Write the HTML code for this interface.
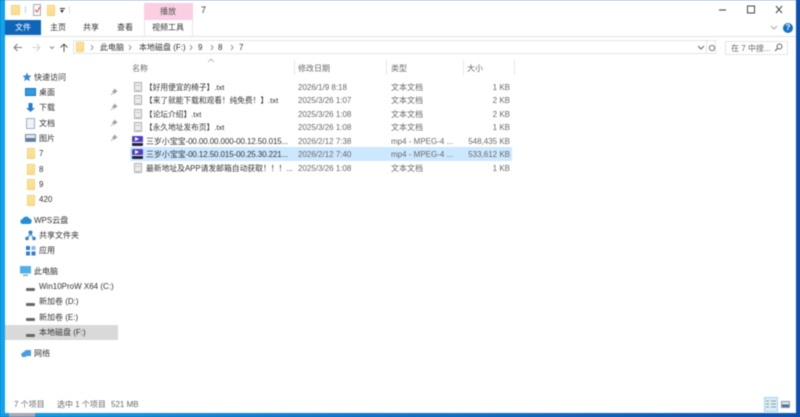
<!DOCTYPE html>
<html><head><meta charset="utf-8"><style>
html,body{margin:0;padding:0;width:800px;height:417px;overflow:hidden;background:#1058b8}
#a{position:absolute;left:0;top:0;width:800px;height:417px;overflow:hidden;filter:blur(.4px);font-family:"Liberation Sans","Noto Sans CJK SC",sans-serif;font-size:8px;color:#333}
#a div,#a svg{position:absolute}
.t{white-space:nowrap;line-height:12px;height:12px;margin-top:1px}
.g{color:#686868}
.n{font-size:7.7px}
.s{width:1px;background:#e5e5e5}
.f{background:linear-gradient(#fbe39a,#f9dd87);border-radius:1px;box-shadow:inset 0 0 0 .5px #e8c66a}
.d{width:8px;height:10px;background:#ececec;border:1px solid #b0b0b0;box-sizing:border-box}
.d:after{content:"";position:absolute;left:1px;right:1px;top:2px;height:4px;border-top:1px solid #c4c4c4;border-bottom:1px solid #c4c4c4}
.v{width:11px;height:10px;background:linear-gradient(#5140c4 0 60%,#e8e8f0 60% 70%,#23233f 70%);border-radius:1px}
.v:after{content:"";position:absolute;left:3px;top:1px;border-left:4px solid #fff;border-top:2px solid transparent;border-bottom:2px solid transparent}
.h{width:9px;height:3px;background:#666;border-radius:1px}
</style></head><body><div id="a">
<div style="left:0;top:0;width:5px;height:417px;background:#12a3ea"></div>
<div style="left:0;top:413px;width:800px;height:4px;background:linear-gradient(90deg,#129fe6,#0f78d0 45%,#0d52b0)"></div>
<div style="left:9px;top:413px;width:26px;height:4px;background:#a8a8b0"></div>
<div style="left:796px;top:0;width:4px;height:417px;background:#0e4fae"></div>
<div style="left:5px;top:0;width:791px;height:413px;background:#fff"></div>

<div class="f" style="left:11px;top:5px;width:9px;height:10px"></div>
<div style="left:25px;top:6px;width:1px;height:7px;background:#ccc"></div>
<div style="left:33px;top:4px;width:6px;height:10px;background:#fafafa;border:1px solid #aaa"></div>
<svg style="left:34px;top:6px" width="7" height="7"><path d="M1 4l2 2 3-5" fill="none" stroke="#d9484a" stroke-width="1"/></svg>
<div class="f" style="left:47px;top:5px;width:8px;height:11px"></div>
<div style="left:60px;top:8px;width:5px;height:1px;background:#333"></div>
<div style="left:60px;top:10px;width:0;height:0;border:2.5px solid transparent;border-top:3px solid #333"></div>
<div style="left:69px;top:6px;width:1px;height:7px;background:#ddd"></div>

<div style="left:144px;top:3px;width:49px;height:17px;background:#f9cfe1"></div>
<div class="t" style="left:160px;top:5px;color:#555">播放</div>
<div class="t" style="left:201px;top:3px;font-size:9px;color:#333">7</div>

<svg style="left:716px;top:4px" width="72" height="12"><path d="M3 6h7" stroke="#555" stroke-width="1.2"/><rect x="31.5" y="2" width="7" height="7" fill="none" stroke="#444" stroke-width="1"/><path d="M60 2l6 7M66 2l-6 7" stroke="#444" stroke-width="1"/></svg>

<div style="left:5px;top:20px;width:36px;height:15px;background:#0f66b8"></div>
<div class="t" style="left:15px;top:21px;color:#fff">文件</div>
<div class="t" style="left:50px;top:21px">主页</div>
<div class="t" style="left:83px;top:21px">共享</div>
<div class="t" style="left:117px;top:21px">查看</div>
<div style="left:144px;top:20px;width:1px;height:16px;background:#e6e6e6"></div>
<div style="left:192px;top:20px;width:1px;height:16px;background:#e6e6e6"></div>
<div class="t" style="left:152px;top:21px">视频工具</div>
<svg style="left:770px;top:25px" width="8" height="6"><path d="M1 1l3 3 3-3" fill="none" stroke="#aaa" stroke-width="1"/></svg>
<div style="left:783px;top:23px;width:10px;height:10px;border-radius:50%;background:#1370c4;color:#fff;font-size:8px;font-weight:bold;line-height:10px;text-align:center">?</div>
<div style="left:5px;top:36px;width:791px;height:1px;background:#e2e2e2"></div>

<svg style="left:12px;top:42px" width="60" height="11"><path d="M2 5.5h8M2 5.5l3.5-3.5M2 5.5l3.5 3.5" fill="none" stroke="#777" stroke-width="1"/><path d="M20 5.5h8M28 5.5l-3.5-3.5M28 5.5l-3.5 3.5" fill="none" stroke="#d2d2d2" stroke-width="1"/><path d="M38 4.5l2 2 2-2" fill="none" stroke="#888" stroke-width="1"/><path d="M52 10V2M52 2l-3.5 3.5M52 2l3.5 3.5" fill="none" stroke="#555" stroke-width="1"/></svg>
<div style="left:73px;top:40px;width:643px;height:14px;border:1px solid #e3e3e3;box-sizing:border-box"></div>
<div class="f" style="left:76px;top:42px;width:8px;height:10px"></div>
<svg style="left:90px;top:44px" width="160" height="7"><path d="M1 1l2 2.5-2 2.5M39 1l2 2.5-2 2.5M100 1l2 2.5-2 2.5M121 1l2 2.5-2 2.5M141 1l2 2.5-2 2.5" fill="none" stroke="#888" stroke-width=".9"/></svg>
<div class="t" style="left:100px;top:41px">此电脑</div>
<div class="t" style="left:139px;top:41px">本地磁盘 (F:)</div>
<div class="t" style="left:198px;top:41px">9</div>
<div class="t" style="left:218px;top:41px">8</div>
<div class="t" style="left:239px;top:41px">7</div>
<svg style="left:698px;top:44px" width="20" height="8"><path d="M0 2l3 3 3-3" fill="none" stroke="#666" stroke-width="1"/><circle cx="14" cy="4" r="2.6" fill="none" stroke="#777" stroke-width="1"/></svg>
<div style="left:706px;top:40px;width:1px;height:14px;background:#e3e3e3"></div>
<div style="left:725px;top:41px;width:63px;height:14px;border:1px solid #e6e6e6;box-sizing:border-box"></div>
<div class="t g" style="left:731px;top:42px">在 7 中搜...</div>
<svg style="left:774px;top:43px" width="9" height="9"><circle cx="5.5" cy="3.5" r="2.5" fill="none" stroke="#666"/><path d="M3.5 5.5L1 8" stroke="#666" stroke-width="1.2"/></svg>

<svg style="left:207px;top:58px" width="8" height="5"><path d="M1 4l3-3 3 3" fill="none" stroke="#aaa" stroke-width=".8"/></svg>
<div class="s" style="left:294px;top:60px;height:15px"></div>
<div class="s" style="left:386px;top:60px;height:15px"></div>
<div class="s" style="left:463px;top:60px;height:15px"></div>
<div class="s" style="left:514px;top:60px;height:15px"></div>
<div class="t g" style="left:132px;top:62px">名称</div>
<div class="t g" style="left:298px;top:62px">修改日期</div>
<div class="t g" style="left:391px;top:62px">类型</div>
<div class="t g" style="left:467px;top:62px">大小</div>

<div style="left:130px;top:147px;width:382px;height:14px;background:#cce8ff"></div>

<div class="d" style="left:134px;top:82px"></div>
<div class="d" style="left:134px;top:95px"></div>
<div class="d" style="left:134px;top:109px"></div>
<div class="d" style="left:134px;top:122px"></div>
<div class="v" style="left:132px;top:136px"></div>
<div class="v" style="left:132px;top:149px"></div>
<div class="d" style="left:134px;top:163px"></div>

<div class="t n" style="left:145px;top:81px">【好用便宜的椅子】.txt</div>
<div class="t n" style="left:145px;top:94px">【来了就能下载和观看！纯免费！】.txt</div>
<div class="t n" style="left:145px;top:108px">【论坛介绍】.txt</div>
<div class="t n" style="left:145px;top:121px">【永久地址发布页】.txt</div>
<div class="t" style="left:146px;top:135px;letter-spacing:-.1px">三岁小宝宝-00.00.00.000-00.12.50.015...</div>
<div class="t" style="left:146px;top:148px;letter-spacing:-.1px">三岁小宝宝-00.12.50.015-00.25.30.221...</div>
<div class="t" style="left:146px;top:162px;font-size:7.8px">最新地址及APP请发邮箱自动获取！！！...</div>

<div class="t g" style="left:298px;top:81px">2026/1/9 8:18</div>
<div class="t g" style="left:298px;top:94px">2025/3/26 1:07</div>
<div class="t g" style="left:298px;top:108px">2025/3/26 1:08</div>
<div class="t g" style="left:298px;top:121px">2025/3/26 1:08</div>
<div class="t g" style="left:298px;top:135px">2026/2/12 7:38</div>
<div class="t g" style="left:298px;top:148px">2026/2/12 7:40</div>
<div class="t g" style="left:298px;top:162px">2025/3/26 1:08</div>

<div class="t g" style="left:391px;top:81px">文本文档</div>
<div class="t g" style="left:391px;top:94px">文本文档</div>
<div class="t g" style="left:391px;top:108px">文本文档</div>
<div class="t g" style="left:391px;top:121px">文本文档</div>
<div class="t g" style="left:391px;top:135px">mp4 - MPEG-4 ...</div>
<div class="t g" style="left:391px;top:148px">mp4 - MPEG-4 ...</div>
<div class="t g" style="left:391px;top:162px">文本文档</div>

<div class="t g" style="right:290px;top:81px">1 KB</div>
<div class="t g" style="right:290px;top:94px">2 KB</div>
<div class="t g" style="right:290px;top:108px">2 KB</div>
<div class="t g" style="right:290px;top:121px">1 KB</div>
<div class="t g" style="right:290px;top:135px">548,435 KB</div>
<div class="t g" style="right:290px;top:148px">533,612 KB</div>
<div class="t g" style="right:290px;top:162px">1 KB</div>

<div style="left:5px;top:325px;width:113px;height:15px;background:#d9d9d9"></div>

<svg style="left:22px;top:72px" width="10" height="10"><path d="M5 .5l1.4 3 3.1.3-2.4 2.1.8 3.3L5 7.5 2.1 9.2l.8-3.3L.5 3.8l3.1-.3z" fill="#3d87d6"/></svg>
<div class="t" style="left:34px;top:71px">快速访问</div>
<div style="left:25px;top:88px;width:11px;height:8px;background:#2f9be6;border:1px solid #1d6fb8;box-sizing:border-box"></div>
<div class="t" style="left:39px;top:86px">桌面</div>
<svg style="left:25px;top:102px" width="11" height="11"><path d="M3.5 1h4v5H10L5.5 10 1 6h2.5z" fill="#2a7cd3"/></svg>
<div class="t" style="left:39px;top:101px">下载</div>
<div style="left:26px;top:118px;width:9px;height:11px;background:#eef3f8;border:1px solid #9fb0c0;box-sizing:border-box"></div>
<div class="t" style="left:39px;top:117px">文档</div>
<div style="left:25px;top:134px;width:11px;height:8px;background:linear-gradient(#dfe8f2 50%,#5b7da3 50%);border:1px solid #7a8ea5;box-sizing:border-box"></div>
<div class="t" style="left:39px;top:132px">图片</div>
<svg style="left:110px;top:88px" width="8" height="8"><path d="M4.5 1l2.5 2.5-1.5.5-1 1.5-2-2 1.5-1zM3 5L1 7" fill="#a0a0a0" stroke="#a0a0a0" stroke-width=".7"/></svg>
<svg style="left:110px;top:103px" width="8" height="8"><path d="M4.5 1l2.5 2.5-1.5.5-1 1.5-2-2 1.5-1zM3 5L1 7" fill="#a0a0a0" stroke="#a0a0a0" stroke-width=".7"/></svg>
<svg style="left:110px;top:119px" width="8" height="8"><path d="M4.5 1l2.5 2.5-1.5.5-1 1.5-2-2 1.5-1zM3 5L1 7" fill="#a0a0a0" stroke="#a0a0a0" stroke-width=".7"/></svg>
<svg style="left:110px;top:134px" width="8" height="8"><path d="M4.5 1l2.5 2.5-1.5.5-1 1.5-2-2 1.5-1zM3 5L1 7" fill="#a0a0a0" stroke="#a0a0a0" stroke-width=".7"/></svg>

<div class="f" style="left:27px;top:148px;width:8px;height:11px"></div><div class="t" style="left:39px;top:147px">7</div>
<div class="f" style="left:27px;top:164px;width:8px;height:11px"></div><div class="t" style="left:39px;top:163px">8</div>
<div class="f" style="left:27px;top:179px;width:8px;height:11px"></div><div class="t" style="left:39px;top:178px">9</div>
<div class="f" style="left:27px;top:195px;width:8px;height:11px"></div><div class="t" style="left:39px;top:193px">420</div>

<svg style="left:20px;top:215px" width="12" height="10"><path d="M3 9a2.5 2.5 0 0 1-.3-5A3.6 3.6 0 0 1 9.3 3.5 2.8 2.8 0 0 1 9.5 9z" fill="#1f8fd8"/></svg>
<div class="t" style="left:34px;top:214px">WPS云盘</div>
<svg style="left:25px;top:230px" width="11" height="11"><circle cx="5.5" cy="2.5" r="2" fill="#2f7fd0"/><circle cx="2" cy="8.5" r="1.8" fill="#2f7fd0"/><circle cx="9" cy="8.5" r="1.8" fill="#2f7fd0"/><path d="M5.5 4L2 8.5M5.5 4L9 8.5" stroke="#2f7fd0"/></svg>
<div class="t" style="left:39px;top:229px">共享文件夹</div>
<svg style="left:26px;top:246px" width="10" height="10"><rect width="4" height="4" fill="#2f7fd0"/><rect x="5.5" width="4" height="4" fill="#8fb8e4"/><rect y="5.5" width="4" height="4" fill="#2f7fd0"/><rect x="5.5" y="5.5" width="4" height="4" fill="#2f7fd0"/></svg>
<div class="t" style="left:39px;top:244px">应用</div>

<svg style="left:20px;top:266px" width="12" height="11"><rect y="0" width="11" height="7.5" fill="#4fb0e8"/><rect x="3" y="8.5" width="5" height="1.5" fill="#8fa8bd"/></svg>
<div class="t" style="left:34px;top:265px">此电脑</div>
<div class="h" style="left:26px;top:288px"></div><div class="t" style="left:39px;top:280px">Win10ProW X64 (C:)</div>
<div class="h" style="left:26px;top:303px"></div><div class="t" style="left:39px;top:295px">新加卷 (D:)</div>
<div class="h" style="left:26px;top:318px"></div><div class="t" style="left:39px;top:311px">新加卷 (E:)</div>
<div class="h" style="left:26px;top:334px"></div><div class="t" style="left:39px;top:326px">本地磁盘 (F:)</div>

<svg style="left:20px;top:348px" width="12" height="11"><path d="M1 6l5-4h5v6H6v1H2z" fill="#4b9be0"/></svg>
<div class="t" style="left:34px;top:347px">网络</div>

<div class="t g" style="left:14px;top:398px">7 个项目</div>
<div class="t g" style="left:57px;top:398px">选中 1 个项目</div>
<div class="t g" style="left:111px;top:398px">521 MB</div>

<div style="left:764px;top:397px;width:14px;height:15px;background:#d8eef9;border:1px solid #9fd5ee;box-sizing:border-box"></div>
<svg style="left:766px;top:400px" width="10" height="9"><path d="M0 1h3M5 1h5M0 4h3M5 4h5M0 7h3M5 7h5" stroke="#9a9a9a" stroke-width="1"/></svg>
<div style="left:781px;top:401px;width:9px;height:7px;background:linear-gradient(#dbe5ee 50%,#4f6f90 50%);border:1px solid #8a9bab;box-sizing:border-box"></div>
</div></body></html>
